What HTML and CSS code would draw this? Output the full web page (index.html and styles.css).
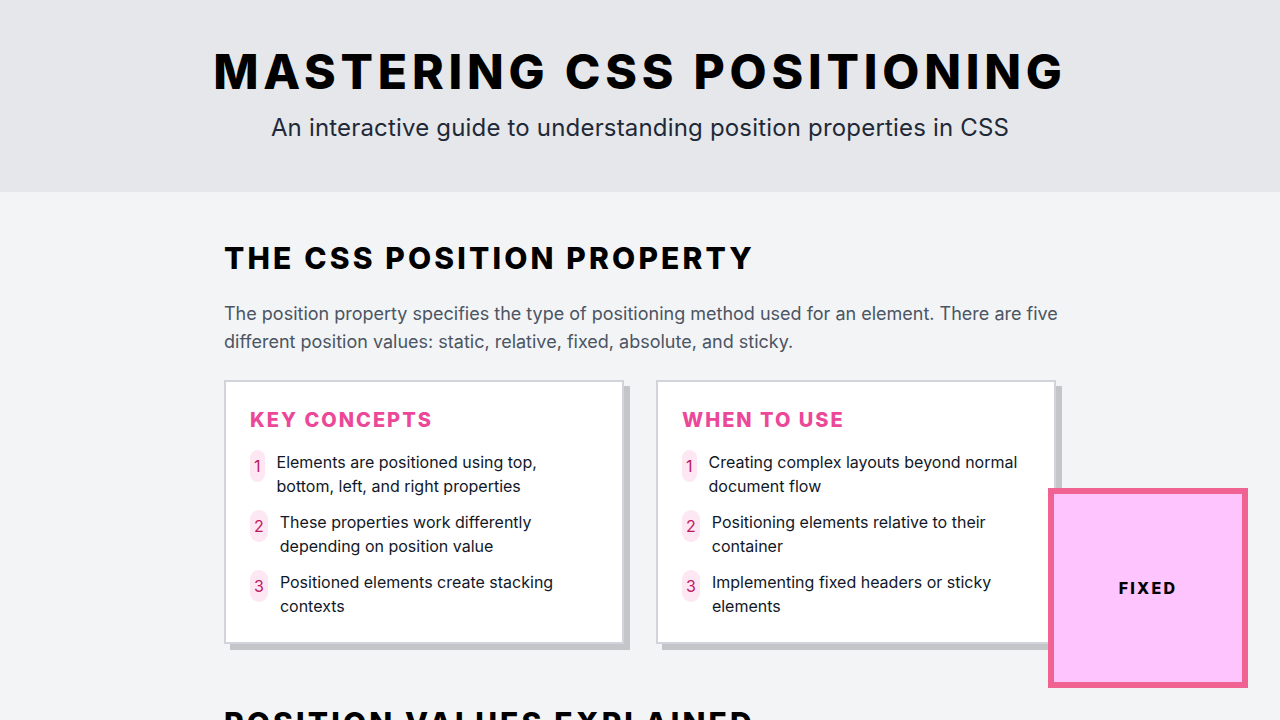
FILE: index.html
```html
<!DOCTYPE html>
<html lang="en">
<head>
<meta charset="utf-8">
<title>Mastering CSS Positioning</title>
<link rel="stylesheet" href="styles.css">
</head>
<body>
<header class="hero">
  <h1 class="hero-title">MASTERING CSS POSITIONING</h1>
  <p class="hero-sub">An interactive guide to understanding position properties in CSS</p>
</header>
<main class="main">
  <section class="section">
    <h2 class="section-title">THE CSS POSITION PROPERTY</h2>
    <p class="section-text">The position property specifies the type of positioning method used for an element. There are five different position values: static, relative, fixed, absolute, and sticky.</p>
    <div class="cards">
      <div class="card">
        <h3 class="card-title">KEY CONCEPTS</h3>
        <ul class="list">
          <li class="item"><span class="num">1</span><span class="item-text">Elements are positioned using top, bottom, left, and right properties</span></li>
          <li class="item"><span class="num">2</span><span class="item-text">These properties work differently depending on position value</span></li>
          <li class="item"><span class="num">3</span><span class="item-text">Positioned elements create stacking contexts</span></li>
        </ul>
      </div>
      <div class="card">
        <h3 class="card-title">WHEN TO USE</h3>
        <ul class="list">
          <li class="item"><span class="num">1</span><span class="item-text">Creating complex layouts beyond normal document flow</span></li>
          <li class="item"><span class="num">2</span><span class="item-text">Positioning elements relative to their container</span></li>
          <li class="item"><span class="num">3</span><span class="item-text">Implementing fixed headers or sticky elements</span></li>
        </ul>
      </div>
    </div>
  </section>
  <section class="section">
    <h2 class="section-title">POSITION VALUES EXPLAINED</h2>
    <p class="section-text">Each position value changes how an element is placed in the document and how the offset properties affect it.</p>
  </section>
</main>
<div class="fixed-box">FIXED</div>
</body>
</html>
```

FILE: styles.css
```css
* { box-sizing: border-box; }
html, body { margin: 0; padding: 0; }
body {
  font-family: Inter, "Noto Sans", "Liberation Sans", sans-serif;
  background: #f3f4f6;
  color: #111827;
}
.hero {
  background: #e5e7eb;
  padding: 48px 0;
  text-align: center;
}
.hero-title {
  margin: 0;
  font-size: 48px;
  line-height: 48px;
  font-weight: 800;
  letter-spacing: 0.1em;
  color: #000;
}
.hero-sub {
  margin: 16px 0 0;
  font-size: 24px;
  line-height: 32px;
  letter-spacing: 0.18px;
  color: #1f2937;
}
.main {
  padding: 48px 0;
}
.section {
  width: 832px;
  margin: 0 auto 61px;
}
.section-title {
  margin: 0;
  font-size: 30px;
  line-height: 36px;
  font-weight: 800;
  letter-spacing: 0.105em;
  color: #000;
}
.section-text {
  margin: 24px -12px 24px 0;
  font-size: 18px;
  line-height: 28px;
  color: #4b5563;
}
.cards {
  display: grid;
  grid-template-columns: 1fr 1fr;
  gap: 32px;
}
.card {
  background: #fff;
  border: 2px solid #d1d5db;
  box-shadow: 6px 6px 0 #c4c5c9;
  padding: 24px;
}
.card-title {
  margin: 0 0 16px;
  font-size: 20px;
  line-height: 28px;
  font-weight: 800;
  letter-spacing: 0.1em;
  color: #ec4899;
}
.list {
  list-style: none;
  margin: 0;
  padding: 0;
  display: flex;
  flex-direction: column;
  gap: 12px;
}
.item {
  display: flex;
  align-items: flex-start;
  gap: 12px;
  font-size: 16px;
  line-height: 24px;
  color: #111827;
}
.num {
  flex: none;
  background: #fce7f3;
  color: #be185d;
  border-radius: 9999px;
  padding: 0 4px;
  height: 32px;
  line-height: 32px;
  font-size: 16px;
}
.fixed-box {
  position: fixed;
  right: 32px;
  bottom: 32px;
  width: 200px;
  height: 200px;
  border: 6px solid #f06292;
  background: #fdc4fd;
  display: flex;
  align-items: center;
  justify-content: center;
  font-size: 16px;
  font-weight: 800;
  letter-spacing: 0.14em;
  color: #000;
}
```
